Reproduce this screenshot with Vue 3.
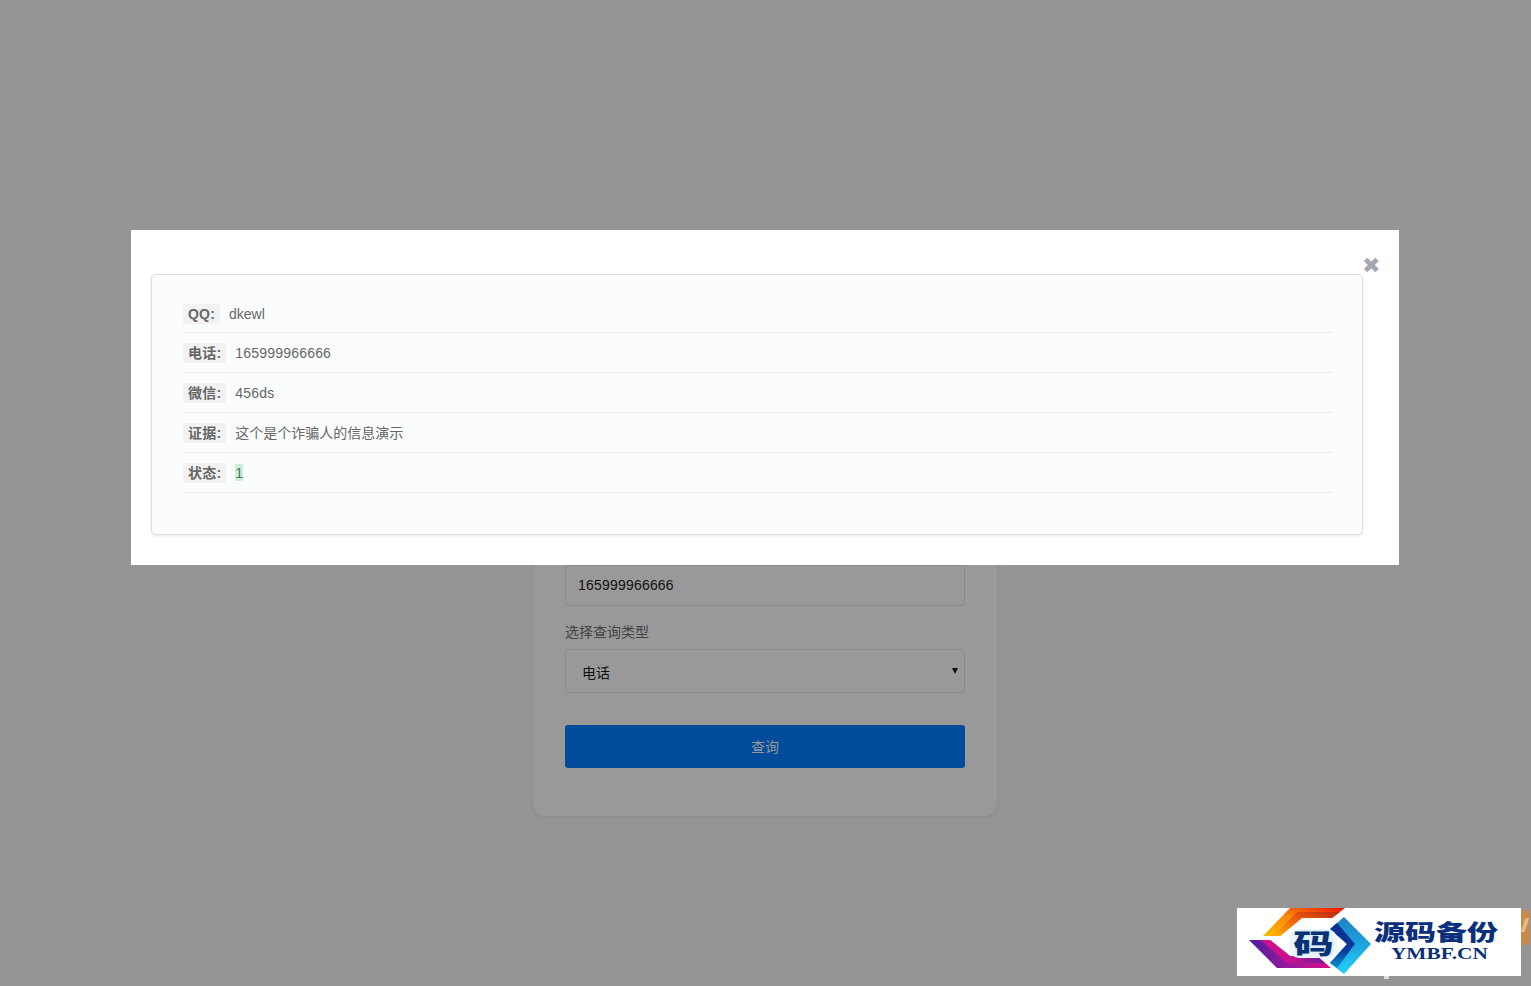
<script setup>
const rows = [
  { label: 'QQ:', value: 'dkewl' },
  { label: '电话:', value: '165999966666', wide: true },
  { label: '微信:', value: '456ds', wide: true },
  { label: '证据:', value: '这个是个诈骗人的信息演示' },
  { label: '状态:', value: '1', badge: true },
]
</script>

<template>
  <div class="page">
    <div class="card">
      <div class="input">165999966666</div>
      <div class="field-label">选择查询类型</div>
      <div class="select">
        <span>电话</span>
        <i class="arrow"></i>
      </div>
      <div class="button">查询</div>
    </div>

    <div class="tag-behind"></div>
    <div class="speck"></div>

    <div class="logo">
      <svg class="mark" width="140" height="68" viewBox="0 0 140 68">
        <defs>
          <linearGradient id="top" x1="0" y1="1" x2="1" y2="0">
            <stop offset="0" stop-color="#fdbb00" />
            <stop offset="0.5" stop-color="#f98a0a" />
            <stop offset="1" stop-color="#f21000" />
          </linearGradient>
          <linearGradient id="topin" x1="0" y1="1" x2="1" y2="0">
            <stop offset="0" stop-color="#fcb000" />
            <stop offset="0.5" stop-color="#f0600c" />
            <stop offset="1" stop-color="#b82a10" />
          </linearGradient>
          <linearGradient id="bot" x1="0" y1="0" x2="1" y2="0">
            <stop offset="0" stop-color="#4f1fa0" />
            <stop offset="0.6" stop-color="#a8189a" />
            <stop offset="1" stop-color="#d80e88" />
          </linearGradient>
          <linearGradient id="botin" x1="0" y1="0" x2="1" y2="0">
            <stop offset="0" stop-color="#d80e88" />
            <stop offset="0.5" stop-color="#c5128e" />
            <stop offset="1" stop-color="#6a20a0" />
          </linearGradient>
          <linearGradient id="arrow" x1="0" y1="0" x2="0" y2="1">
            <stop offset="0" stop-color="#1f80c0" />
            <stop offset="0.5" stop-color="#1ca6de" />
            <stop offset="1" stop-color="#24d0fa" />
          </linearGradient>
          <linearGradient id="arrowin" x1="0" y1="0" x2="0" y2="1">
            <stop offset="0" stop-color="#0a2f90" />
            <stop offset="0.6" stop-color="#0c3a9c" />
            <stop offset="1" stop-color="#0e90d0" />
          </linearGradient>
        </defs>
        <polygon points="26,28 53,0 108,0 95,10 65,10 43,28" fill="url(#top)" />
        <polygon points="36,28 60,4 103,4 95,10 65,10 43,28" fill="url(#topin)" />
        <polygon points="12,32 33,32 53,48 80,48 94,60 40,60" fill="url(#bot)" />
        <polygon points="24,32 33,32 53,48 80,48 88,55 50,55" fill="url(#botin)" />
        <polygon points="93,21 107,9 134,36 107,66 93,55 110,36" fill="url(#arrow)" />
        <polygon points="93,21 100,15 118,36 100,60 93,55 110,36" fill="url(#arrowin)" />
      </svg>
      <div class="ma"><span>码</span></div>
      <div class="cn">源码备份</div>
      <div class="en">YMBF.CN</div>
    </div>

    <div class="modal">
      <span class="close">✖</span>
      <div class="panel">
        <div v-for="row in rows" :key="row.label" class="row">
          <span class="key">{{ row.label }}</span>
          <span class="val" :class="{ ok: row.badge, wide: row.wide }">{{ row.value }}</span>
        </div>
      </div>
    </div>
  </div>
</template>

<style scoped>
.page {
  position: relative;
  height: 986px;
  overflow: hidden;
  background: #959595;
  font-family: "Liberation Sans", "Noto Sans CJK SC", sans-serif;
  font-size: 14px;
}
.card {
  position: absolute;
  left: 533px;
  top: 400px;
  width: 464px;
  height: 416px;
  box-sizing: border-box;
  padding: 165px 32px 0;
  background: #999;
  border-radius: 12px;
  box-shadow: 0 1px 4px rgba(0, 0, 0, 0.08);
}
.input {
  height: 41px;
  box-sizing: border-box;
  padding: 11px 12px 0 12px;
  border: 1px solid #8a8a8a;
  border-radius: 4px;
  color: #111;
  line-height: 16px;
  letter-spacing: 0.2px;
}
.field-label {
  margin-top: 17px;
  height: 18px;
  line-height: 18px;
  color: #444;
}
.select {
  position: relative;
  margin-top: 8px;
  height: 44px;
  box-sizing: border-box;
  padding: 15px 16px 0;
  border: 1px solid #8a8a8a;
  border-radius: 4px;
  color: #111;
  line-height: 16px;
}
.arrow {
  position: absolute;
  right: 6px;
  top: 18px;
  border-left: 3px solid transparent;
  border-right: 3px solid transparent;
  border-top: 6px solid #111;
}
.button {
  margin-top: 32px;
  height: 43px;
  line-height: 44px;
  text-align: center;
  color: #999;
  background: #004c9b;
  border-radius: 3px;
}
.tag-behind {
  position: absolute;
  right: 1px;
  top: 910px;
  width: 20px;
  height: 35px;
  background: #c98a4e;
  border-radius: 0 5px 5px 0;
}
.tag-behind::after {
  content: "";
  position: absolute;
  right: 3px;
  top: 8px;
  width: 4px;
  height: 14px;
  background: #e2b98c;
  transform: skewX(-18deg);
}
.speck {
  position: absolute;
  left: 1384px;
  top: 976px;
  width: 5px;
  height: 3px;
  background: #ddd;
}
.logo {
  position: absolute;
  left: 1237px;
  top: 908px;
  width: 284px;
  height: 68px;
  background: #fff;
  overflow: hidden;
}
.mark {
  position: absolute;
  left: 0;
  top: 0;
}
.ma {
  position: absolute;
  left: 52px;
  top: 21px;
  width: 48px;
  height: 29px;
  line-height: 28px;
  text-align: center;
  font-family: "Noto Sans CJK SC", sans-serif;
  font-weight: 900;
  font-size: 27px;
  color: #0a3272;
  background: #eaf5fc;
  border-radius: 10px;
}
.ma span {
  display: inline-block;
  transform: scaleX(1.5);
  text-shadow: 0 0 2px #bcdff5;
}
.cn {
  position: absolute;
  left: 137px;
  top: 8px;
  font-family: "Noto Sans CJK SC", sans-serif;
  font-weight: 900;
  font-size: 22px;
  line-height: 28px;
  color: #0a2f7c;
  white-space: nowrap;
  transform-origin: left center;
  transform: scaleX(1.41);
}
.en {
  position: absolute;
  left: 154px;
  top: 37px;
  font-family: "Liberation Serif", serif;
  font-weight: 700;
  font-size: 16px;
  line-height: 18px;
  color: #0a2f7c;
  white-space: nowrap;
  transform-origin: left center;
  transform: scaleX(1.33);
}
.modal {
  position: absolute;
  left: 131px;
  top: 230px;
  width: 1268px;
  height: 335px;
  box-sizing: border-box;
  padding: 44px 36px 0 20px;
  background: #fff;
}
.close {
  position: absolute;
  right: 19px;
  top: 24px;
  font-size: 22px;
  line-height: 24px;
  color: #a3a8b0;
}
.panel {
  height: 261px;
  box-sizing: border-box;
  padding: 20px 30px 0 31px;
  background: #fbfcfc;
  border: 1px solid #dfdfdf;
  border-radius: 5px;
  box-shadow: 0 1px 3px rgba(0, 0, 0, 0.1);
}
.row {
  display: flex;
  align-items: center;
  gap: 9px;
  height: 38px;
  box-sizing: border-box;
  border-bottom: 1px solid #ececec;
  color: #666;
}
.row + .row {
  height: 40px;
}
.key {
  padding: 1px 5px;
  line-height: 18px;
  font-weight: 700;
  color: #666;
  background: #f2f2f2;
  border-radius: 3px;
  letter-spacing: 0.2px;
}
.val {
  line-height: 18px;
}
.wide {
  letter-spacing: 0.2px;
}
.ok {
  width: 8px;
  line-height: 17px;
  padding-top: 1px;
  height: 17px;
  box-sizing: border-box;
  text-align: center;
  color: #3a7d4a;
  background: #cfeeda;
}
</style>
